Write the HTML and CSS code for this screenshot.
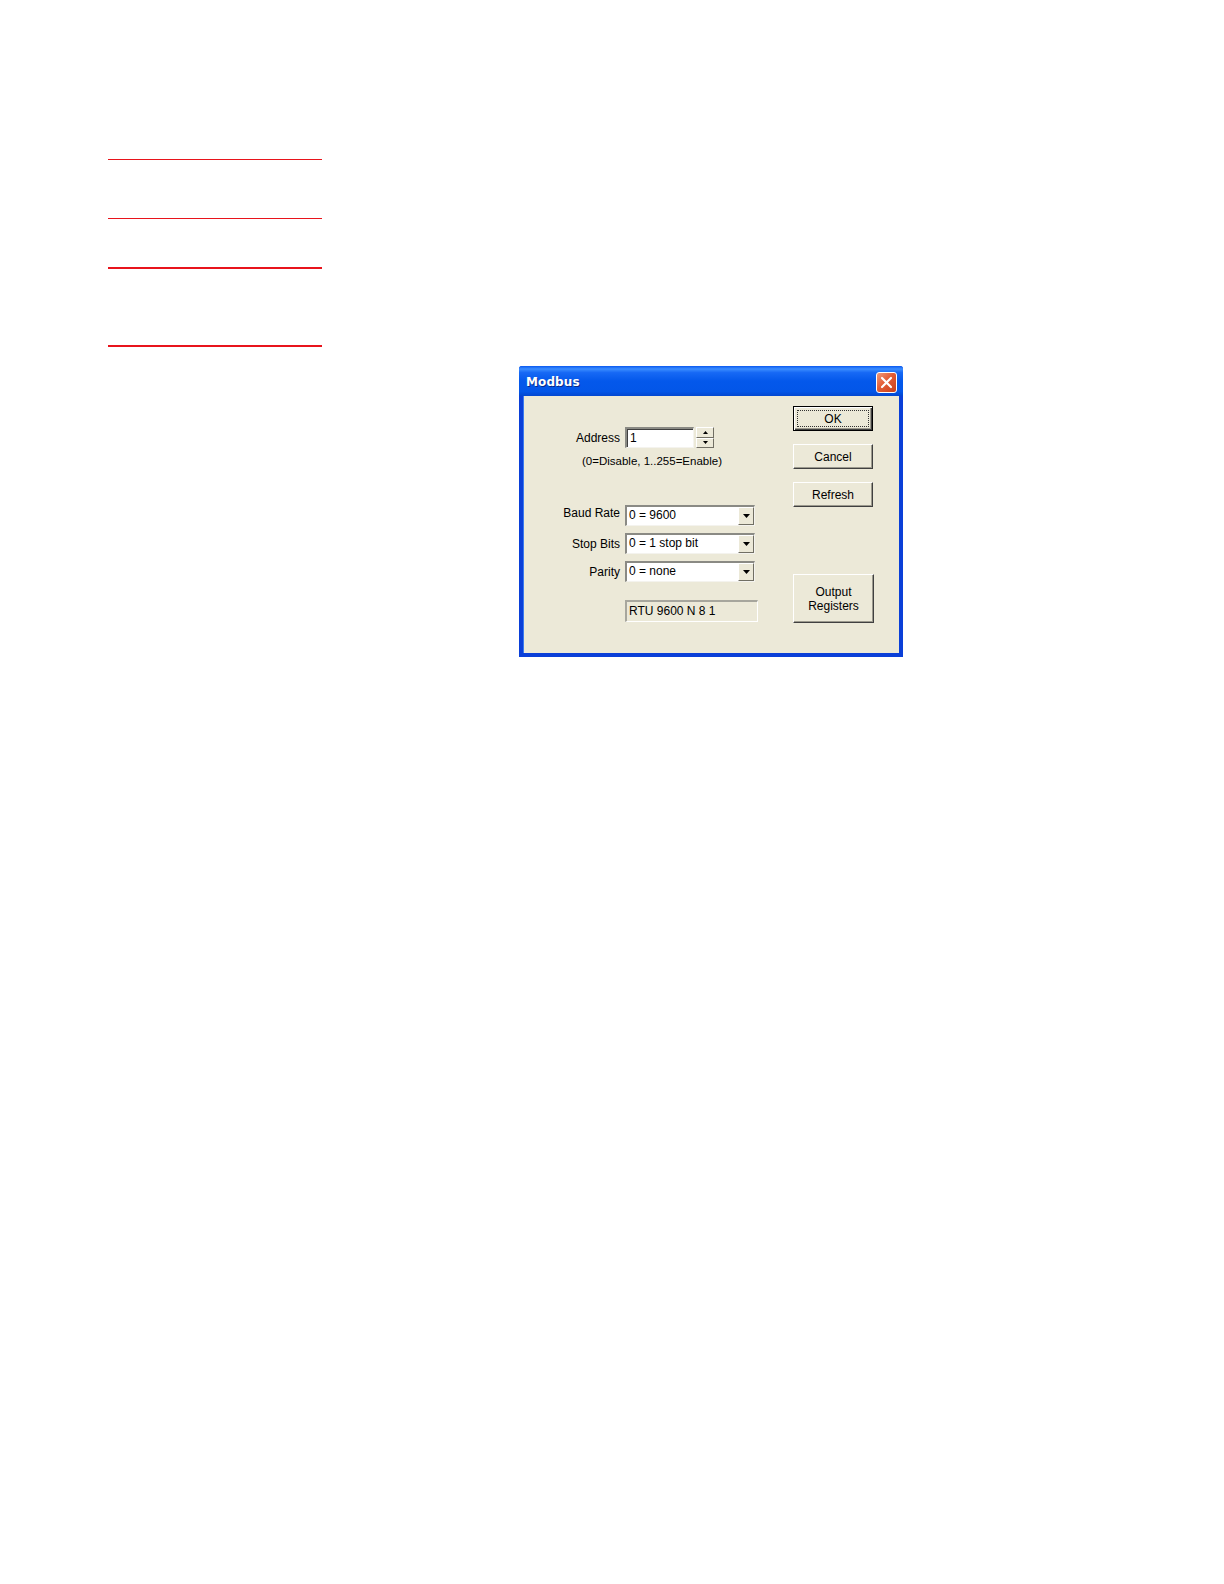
FILE: index.html
```html
<!DOCTYPE html>
<html>
<head>
<meta charset="utf-8">
<title>Modbus</title>
<link rel="stylesheet" href="styles.css">
</head>
<body>
<div class="page">
  <div class="rules">
    <div class="rule r1"></div>
    <div class="rule r2"></div>
    <div class="rule r3"></div>
    <div class="rule r4"></div>
  </div>
  <div class="dialog">
    <div class="titlebar">
      <span class="title">Modbus</span>
      <span class="close">
        <svg width="13" height="13" viewBox="0 0 13 13"><path d="M2 2 L11 11 M11 2 L2 11" stroke="#fff" stroke-width="2.2" stroke-linecap="round"/></svg>
      </span>
    </div>
    <div class="client">
      <div class="form">
        <div class="row row-address">
          <span class="label">Address</span>
          <span class="edit edit-address">1</span>
          <span class="spin">
            <span class="spin-btn"><svg width="5" height="3" viewBox="0 0 5 3"><path d="M2.5 0 L5 3 L0 3 Z" fill="#000"/></svg></span>
            <span class="spin-btn"><svg width="5" height="3" viewBox="0 0 5 3"><path d="M0 0 L5 0 L2.5 3 Z" fill="#000"/></svg></span>
          </span>
        </div>
        <div class="hint">(0=Disable, 1..255=Enable)</div>
        <div class="row row-baud">
          <span class="label label-up">Baud Rate</span>
          <span class="combo"><span class="combo-text">0 = 9600</span><span class="drop"><svg width="7" height="4" viewBox="0 0 7 4"><path d="M0 0 L7 0 L3.5 4 Z" fill="#000"/></svg></span></span>
        </div>
        <div class="row row-stop">
          <span class="label">Stop Bits</span>
          <span class="combo"><span class="combo-text">0 = 1 stop bit</span><span class="drop"><svg width="7" height="4" viewBox="0 0 7 4"><path d="M0 0 L7 0 L3.5 4 Z" fill="#000"/></svg></span></span>
        </div>
        <div class="row row-parity">
          <span class="label">Parity</span>
          <span class="combo"><span class="combo-text">0 = none</span><span class="drop"><svg width="7" height="4" viewBox="0 0 7 4"><path d="M0 0 L7 0 L3.5 4 Z" fill="#000"/></svg></span></span>
        </div>
        <div class="row row-summary">
          <span class="label"></span>
          <span class="readonly">RTU 9600 N 8 1</span>
        </div>
      </div>
      <div class="buttons">
        <button class="btn btn-default"><span class="focus">OK</span></button>
        <button class="btn btn-cancel">Cancel</button>
        <button class="btn btn-refresh">Refresh</button>
        <button class="btn btn-output">Output<br>Registers</button>
      </div>
    </div>
  </div>
</div>
</body>
</html>
```

FILE: styles.css
```css
html, body {
  margin: 0;
  padding: 0;
  background: #ffffff;
}

.page {
  display: flex;
  flex-direction: column;
  padding-top: 159px;
}

.rules {
  display: flex;
  flex-direction: column;
  margin-left: 108px;
  width: 214px;
}

.rule {
  background: #e8141c;
}

.r1 { height: 1px; }
.r2 { height: 1px; margin-top: 58px; }
.r3 { height: 2px; margin-top: 48px; }
.r4 { height: 2px; margin-top: 76px; }

.dialog {
  margin-top: 19px;
  margin-left: 519px;
  width: 384px;
  height: 291px;
  box-sizing: border-box;
  display: flex;
  flex-direction: column;
  background: #0a3fd8;
  border-radius: 3px 3px 0 0;
  font-family: "Liberation Sans", Arial, sans-serif;
  font-size: 12px;
  color: #000;
}

.titlebar {
  height: 30px;
  display: flex;
  align-items: center;
  justify-content: space-between;
  padding: 0 6px 0 7px;
  box-sizing: border-box;
  background: linear-gradient(to bottom, #0a59f0 0%, #3b8dff 10%, #1769f5 22%, #0458eb 50%, #0356e8 85%, #0347d0 100%);
  border-radius: 3px 3px 0 0;
}

.title {
  font-family: "DejaVu Sans", Verdana, sans-serif;
  font-weight: bold;
  font-size: 12px;
  color: #ffffff;
  letter-spacing: 0.1px;
  text-shadow: 1px 1px 0 #0a2a8a;
  margin-top: 2px;
}

.close {
  width: 21px;
  height: 21px;
  box-sizing: border-box;
  border: 1px solid #ffffff;
  border-radius: 3px;
  background: linear-gradient(to bottom right, #f09a7c 0%, #e35d35 45%, #c8401c 100%);
  display: flex;
  align-items: center;
  justify-content: center;
  margin-top: 2px;
}

.client {
  flex: 1;
  margin: 0 4px 4px 4px;
  background: #ece9d8;
  display: flex;
  border-left: 1px solid #3a7af0;
}

.form {
  display: flex;
  flex-direction: column;
  width: 269px;
}

.row {
  display: flex;
  align-items: center;
  height: 21px;
}

.label {
  width: 96px;
  text-align: right;
  margin-right: 5px;
  white-space: nowrap;
}

.label-up {
  position: relative;
  top: -3px;
}

.row-address { margin-top: 31px; }
.row-baud { margin-top: 37px; }
.row-stop { margin-top: 7px; }
.row-parity { margin-top: 7px; }
.row-summary { margin-top: 18px; height: 22px; }

.hint {
  margin-top: 6px;
  margin-left: 58px;
  height: 14px;
  line-height: 14px;
  font-size: 11.5px;
  white-space: nowrap;
}

.edit {
  height: 21px;
  box-sizing: border-box;
  background: #ffffff;
  border-top: 2px solid #8a8a84;
  border-left: 2px solid #8a8a84;
  border-bottom: 1px solid #f4f3ee;
  border-right: 1px solid #f4f3ee;
  box-shadow: inset 1px 1px 0 #404040;
  padding: 1px 3px;
  line-height: 16px;
}

.edit-address {
  width: 69px;
}

.spin {
  display: flex;
  flex-direction: column;
  margin-left: 2px;
  width: 18px;
  height: 21px;
}

.spin-btn {
  flex: 1;
  box-sizing: border-box;
  background: #ece9d8;
  border-top: 1px solid #ffffff;
  border-left: 1px solid #ffffff;
  border-right: 1px solid #716f64;
  border-bottom: 1px solid #716f64;
  display: flex;
  align-items: center;
  justify-content: center;
}

.combo {
  width: 130px;
  height: 21px;
  box-sizing: border-box;
  background: #ffffff;
  border-top: 2px solid #8a8a84;
  border-left: 2px solid #8a8a84;
  border-bottom: 1px solid #f4f3ee;
  border-right: 1px solid #f4f3ee;
  display: flex;
  align-items: stretch;
}

.combo-text {
  flex: 1;
  padding-left: 2px;
  line-height: 17px;
  white-space: nowrap;
}

.drop {
  width: 16px;
  box-sizing: border-box;
  background: #ece9d8;
  border-top: 1px solid #ffffff;
  border-left: 1px solid #ffffff;
  border-right: 1px solid #716f64;
  border-bottom: 1px solid #716f64;
  display: flex;
  align-items: center;
  justify-content: center;
}

.readonly {
  width: 133px;
  height: 22px;
  box-sizing: border-box;
  background: #ece9d8;
  border-top: 2px solid #a7a69d;
  border-left: 2px solid #a7a69d;
  border-bottom: 1px solid #ffffff;
  border-right: 1px solid #ffffff;
  padding-left: 2px;
  line-height: 18px;
  white-space: nowrap;
}

.buttons {
  display: flex;
  flex-direction: column;
  margin-left: 0;
  padding-top: 10px;
}

.btn {
  width: 80px;
  height: 25px;
  box-sizing: border-box;
  padding: 0;
  margin: 0;
  background: #ece9d8;
  font-family: "Liberation Sans", Arial, sans-serif;
  font-size: 12px;
  color: #000;
  border-top: 1px solid #ffffff;
  border-left: 1px solid #ffffff;
  border-right: 1px solid #404040;
  border-bottom: 1px solid #404040;
  box-shadow: inset -1px -1px 0 #9c9a8e;
  line-height: 14px;
  display: flex;
  align-items: center;
  justify-content: center;
}

.btn-default {
  border: 1px solid #000;
  box-shadow: inset 1px 1px 0 #ffffff, inset -1px -1px 0 #404040, inset -2px -2px 0 #9c9a8e;
  padding: 3px;
}

.focus {
  flex: 1;
  align-self: stretch;
  border: 1px dotted #333;
  display: flex;
  align-items: center;
  justify-content: center;
}

.btn-cancel { margin-top: 13px; }
.btn-refresh { margin-top: 13px; }

.btn-output {
  margin-top: 67px;
  height: 49px;
  width: 81px;
  line-height: 14px;
  text-align: center;
}
```
